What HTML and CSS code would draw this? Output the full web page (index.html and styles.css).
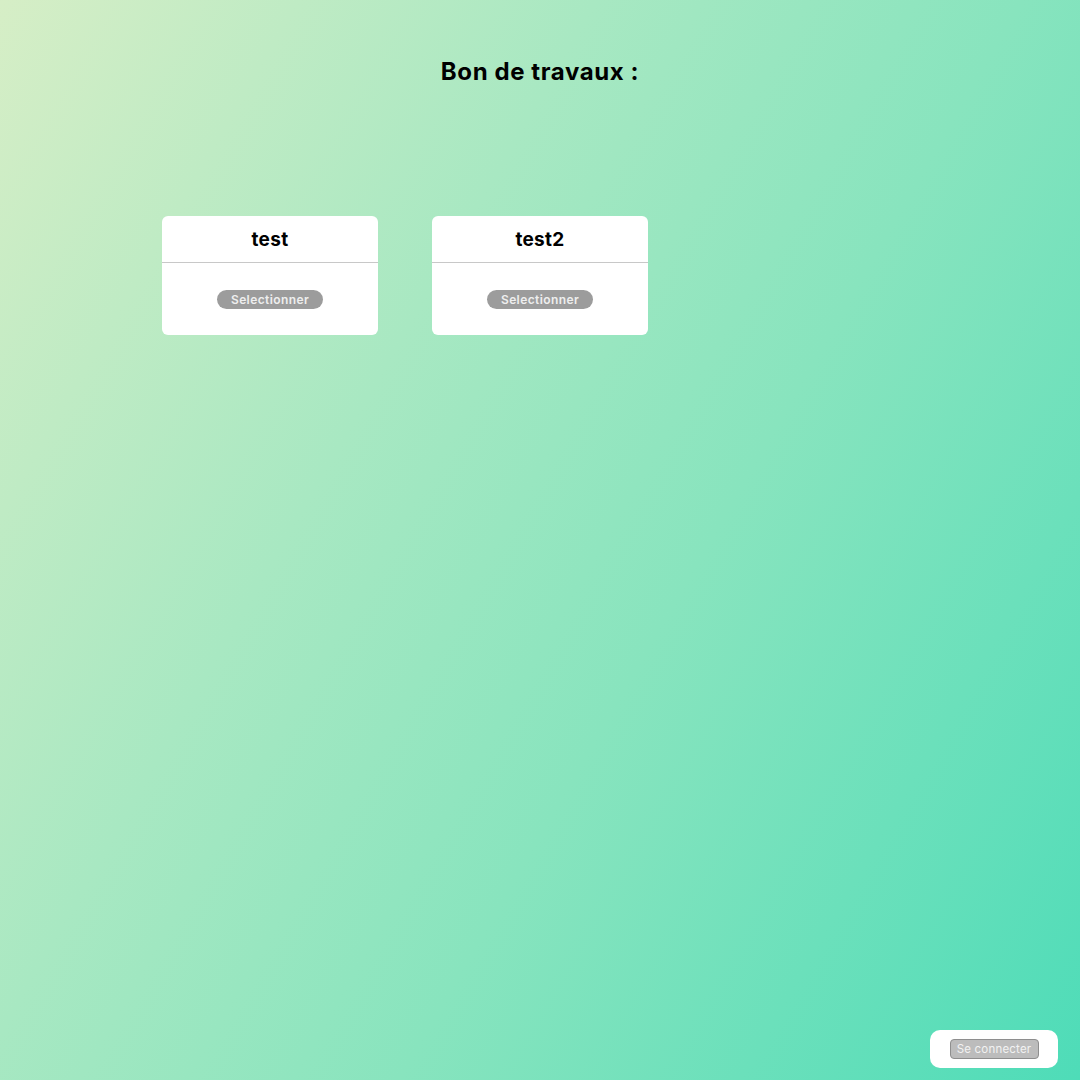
FILE: index.html
```html
<!DOCTYPE html>
<html lang="fr">
<head>
<meta charset="utf-8">
<title>Bon de travaux</title>
<link rel="stylesheet" href="styles.css">
</head>
<body>
<main class="page">
  <h1 class="title">Bon de travaux :</h1>
  <section class="cards">
    <div class="card">
      <div class="card-head">test</div>
      <div class="card-body"><button class="select">Selectionner</button></div>
    </div>
    <div class="card">
      <div class="card-head">test2</div>
      <div class="card-body"><button class="select">Selectionner</button></div>
    </div>
  </section>
</main>
<div class="login-box"><button class="login">Se connecter</button></div>
</body>
</html>
```
FILE: styles.css
```css
html, body {
  margin: 0;
  padding: 0;
  height: 100%;
}
body {
  font-family: "Inter", "Noto Sans", sans-serif;
  background: linear-gradient(120deg, #d6eec6 0%, #a8e8c2 35%, #88e4be 60%, #4edcb8 100%);
  min-height: 1080px;
  color: #000;
  position: relative;
}
.page {
  padding-top: 57px;
}
.title {
  margin: 0;
  text-align: center;
  font-size: 24px;
  font-weight: 700;
  line-height: 30px;
  letter-spacing: 0.6px;
}
.cards {
  display: flex;
  gap: 54px;
  margin-top: 129px;
  padding-left: 162px;
}
.card {
  width: 216px;
  height: 119px;
  background: #fff;
  border-radius: 6px;
}
.card-head {
  height: 46px;
  border-bottom: 1px solid #c8c8c8;
  display: flex;
  align-items: center;
  justify-content: center;
  font-size: 19px;
  font-weight: 700;
  letter-spacing: 0.3px;
}
.card-body {
  display: flex;
  justify-content: center;
  padding-top: 27px;
}
.select {
  border: none;
  background: #9c9c9c;
  color: #eeeeee;
  font-family: "Inter", "Noto Sans", sans-serif;
  font-size: 12px;
  font-weight: 600;
  letter-spacing: 0.4px;
  height: 19px;
  width: 106px;
  padding: 0;
  border-radius: 10px;
  line-height: 19px;
}
.login-box {
  position: absolute;
  right: 22px;
  bottom: 12px;
  width: 128px;
  height: 38px;
  background: #fff;
  border-radius: 10px;
  display: flex;
  align-items: center;
  justify-content: center;
}
.login {
  width: 89px;
  height: 20px;
  padding: 0;
  background: #bcbcbc;
  border: 1.5px solid #8e8e8e;
  border-radius: 4px;
  color: #f2f2f2;
  font-family: "Inter", "Noto Sans", sans-serif;
  font-size: 11.5px;
  font-weight: 400;
  letter-spacing: 0.2px;
  line-height: 17px;
}
```
